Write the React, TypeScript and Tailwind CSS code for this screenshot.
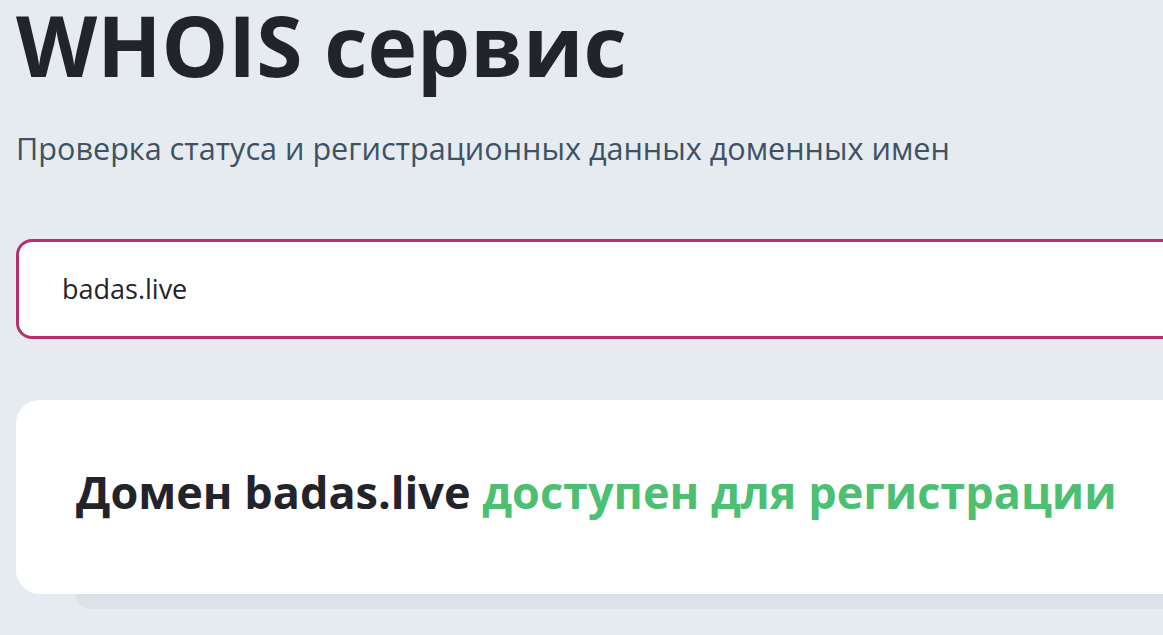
export default function App() {
  return (
    <div className="min-h-screen w-full overflow-hidden bg-[#e6ebf0] font-['Open_Sans',sans-serif]">
      <div className="w-[1240px] pl-4">
        <h1 className="-mt-[5px] text-[84px] font-bold leading-[1.2] text-[#23242b]">WHOIS сервис</h1>
        <p className="mt-[37px] text-[30.6px] leading-none text-[#3e5264]">
          Проверка статуса и регистрационных данных доменных имен
        </p>

        <div className="mt-[76px] flex h-[100px] items-center rounded-2xl border-[3px] border-[#b5306d] bg-white pl-[43px]">
          <span className="text-[27px] text-[#23242b]">badas.live</span>
        </div>

        <div className="relative mt-[61px]">
          <div className="absolute -bottom-[15px] left-[59px] right-0 h-[40px] rounded-b-2xl bg-[#dbe2e9]" />
          <div className="relative flex h-[194px] items-center rounded-3xl bg-white pb-[12px] pl-[60px]">
            <h2 className="text-[45px] font-bold leading-none text-[#23242b]">
              Домен badas.live <span className="text-[#4dbf73]">доступен для регистрации</span>
            </h2>
          </div>
        </div>
      </div>
    </div>
  );
}
